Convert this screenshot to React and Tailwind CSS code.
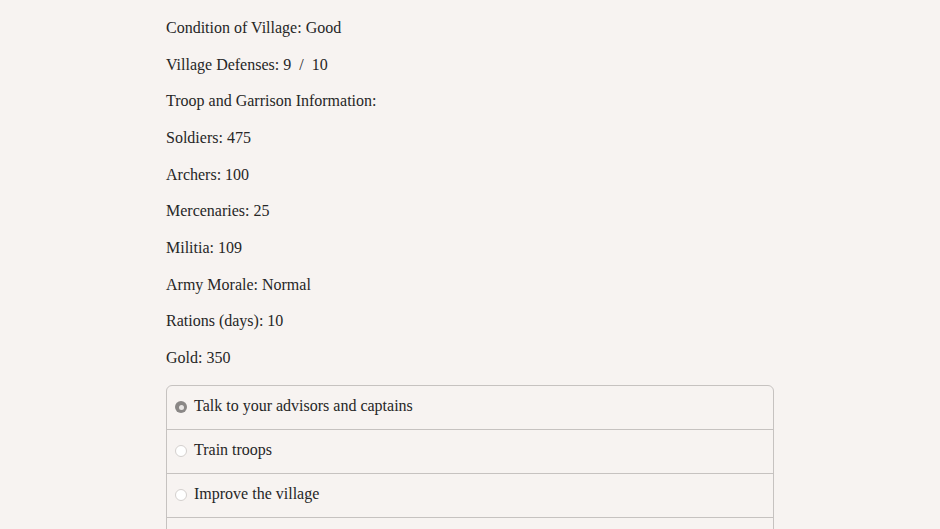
import React from 'react';

const stats = [
  'Condition of Village: Good',
  'Village Defenses: 9  /  10',
  'Troop and Garrison Information:',
  'Soldiers: 475',
  'Archers: 100',
  'Mercenaries: 25',
  'Militia: 109',
  'Army Morale: Normal',
  'Rations (days): 10',
  'Gold: 350',
];

const options = [
  { label: 'Talk to your advisors and captains', selected: true },
  { label: 'Train troops' },
  { label: 'Improve the village' },
  { label: '' },
];

const Radio = ({ selected }) =>
  selected ? (
    <span className="w-[12px] h-[12px] rounded-full bg-[#8a8786] flex items-center justify-center shrink-0">
      <span className="w-[5px] h-[5px] rounded-full bg-[#e8e5e4]" />
    </span>
  ) : (
    <span className="w-[12px] h-[12px] rounded-full bg-white border border-[#d4d0ce] shrink-0" />
  );

export default function App() {
  return (
    <div
      className="w-full h-[529px] overflow-hidden bg-[#f7f3f1] text-[#262626]"
      style={{ fontFamily: '"Liberation Serif", serif' }}
    >
      <div className="w-[608px] mx-auto pt-[10px]">
        {stats.map((s) => (
          <p key={s} className="text-[16px] leading-[36.67px] whitespace-pre">
            {s}
          </p>
        ))}

        {/* choices */}
        <div className="mt-[8px] border border-[#c6c2c0] rounded-t-[6px]">
          {options.map((o, i) => (
            <div
              key={i}
              className={`flex items-center gap-[7px] pl-[8px] ${i > 0 ? 'h-[44px] border-t border-[#c6c2c0]' : 'h-[43px]'}`}
            >
              {o.label && <Radio selected={o.selected} />}
              <span className="text-[16px] leading-none -mt-[2px]">{o.label}</span>
            </div>
          ))}
        </div>
      </div>
    </div>
  );
}
